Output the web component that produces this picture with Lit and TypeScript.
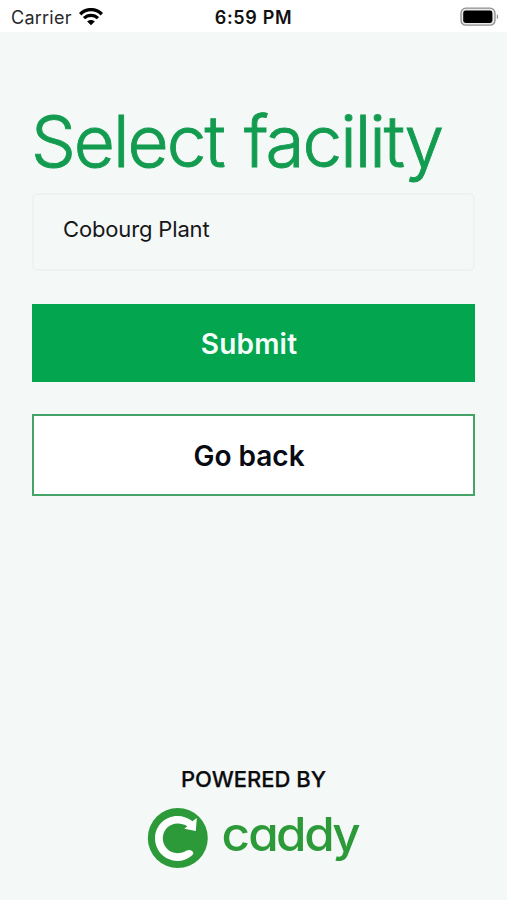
import { LitElement, html, css } from "lit";
import { customElement } from "lit/decorators.js";

@customElement("status-bar")
class StatusBar extends LitElement {
  static styles = css`
    :host { display: grid; grid-template-columns: 1fr auto 1fr; align-items: center;
      height: 32px; padding: 2px 8px 0; box-sizing: border-box; background: #fff; color: #111; }
    .left { display: flex; align-items: center; gap: 7px; padding-left: 3px; font-size: 18px; line-height: 30px; color: #29292b; }
    .carrier { letter-spacing: 0.25px; }
    .time { font-size: 18px; font-weight: 600; letter-spacing: 0.65px; line-height: 30px; padding-top: 1px; }
    .right { display: flex; justify-content: flex-end; }
    svg { display: block; margin-bottom: 2px; }
  `;
  render() {
    return html`
      <div class="left">
        <span class="carrier">Carrier</span>
        <svg width="24" height="18" viewBox="0 0 24 18" fill="none" stroke="#000">
          <path d="M1.200 6.200C7.200.1 16.800.1 22.800 6.200" stroke-width="3.400" />
          <path d="M5 10.200c4-3.900 10-3.900 14 0" stroke-width="3.200" />
          <path d="M12 17.200l-3.800-3.800c2.200-2 5.400-2 7.600 0z" fill="#000" stroke="none" />
        </svg>
      </div>
      <div class="time">6:59 PM</div>
      <div class="right">
        <svg width="39" height="20" viewBox="0 0 39 20">
          <rect x="1" y="1.200" width="34" height="17" rx="4.800" fill="#e9e9e9" stroke="#8e8e8e" stroke-width="1.300" />
          <rect x="3.200" y="3.500" width="29.200" height="12.400" rx="2.400" fill="#000" />
          <path d="M36.800 7.200c1.800.7 1.800 4.300 0 5z" fill="#8e8e8e" />
        </svg>
      </div>
    `;
  }
}

@customElement("caddy-brand")
class CaddyBrand extends LitElement {
  static styles = css`
    :host { display: flex; flex-direction: column; align-items: center; }
    .label { font-size: 22px; font-weight: 500; line-height: 28px; letter-spacing: 0; color: #0c0c0e;
      -webkit-text-stroke: 0.25px #0c0c0e; }
    .logo { display: block; margin-top: 14px; overflow: visible; }
    .word { font-family: Inter, "Noto Sans", sans-serif; font-size: 47px; font-weight: 500;
      font-feature-settings: "cv11" 1; fill: #2d9a3a; }
  `;
  render() {
    return html`
      <div class="label">POWERED BY</div>
      <svg class="logo" width="214" height="62" viewBox="147 807 214 62">
        <circle cx="177.800" cy="838" r="30" fill="#2d9a3a" />
        <path d="M192.400 821.300L196.800 818L195.800 830.900L184.300 828.800L187.300 826.200
          C184.500 824.300 181 823.400 177.500 823.400C169.300 823.400 162.800 830 162.800 838.300
          C162.800 846.600 169.300 853.200 177.500 853.200C180.800 853.200 183.800 852.400 186.500 850.600
          C189.500 849.300 192.200 850 193.200 852.600C193.700 854.200 192.500 855.200 191 856.200
          C187 859.300 182.500 860.900 177.500 860.900C165 860.900 155 850.800 155 838.300
          C155 825.800 165 815.900 177.500 815.900C183 815.900 188.200 817.900 192.400 821.300Z" fill="#fff" />
        <text class="word" transform="translate(221.500 851) scale(1.050 1)" x="0 25.600 52 78.800 105.600" y="0">caddy</text>
      </svg>
    `;
  }
}

@customElement("app-root")
class AppRoot extends LitElement {
  static styles = css`
    :host { display: flex; flex-direction: column; height: 900px; background: #f4f8f7;
      font-family: Inter, "Noto Sans", sans-serif; }
    main { flex: 1; display: flex; flex-direction: column; padding: 64px 32px 0; }
    h1 { margin: 0 0 7px -1px; font-size: 71px; line-height: 90px; font-weight: 300;
      letter-spacing: -2px; word-spacing: 2.5px; color: #139c50; white-space: nowrap; -webkit-text-stroke: 0.9px #139c50; }
    .field { height: 78px; box-sizing: border-box; border: 2px solid #eff2f2; border-radius: 5px;
      padding: 19px 29px; font-size: 22px; line-height: 30px; letter-spacing: -0.15px; color: #17171a; background: #f4f8f7; }
    button { display: block; width: 443px; box-sizing: border-box; padding: 2px 9px 0 0; border: 0;
      font: 600 28px/36px Inter, "Noto Sans", sans-serif; }
    .submit { height: 78px; margin-top: 33px; background: #03a54f; color: #f5fffa; letter-spacing: 0.2px; }
    .back { height: 82px; margin-top: 32px; background: #fff; border: 2px solid #45a368; color: #080b12; }
    caddy-brand { margin-bottom: 31px; }
  `;
  render() {
    return html`
      <status-bar></status-bar>
      <main>
        <h1>Select facility</h1>
        <div class="field">Cobourg Plant</div>
        <button class="submit">Submit</button>
        <button class="back">Go back</button>
      </main>
      <caddy-brand></caddy-brand>
    `;
  }
}
